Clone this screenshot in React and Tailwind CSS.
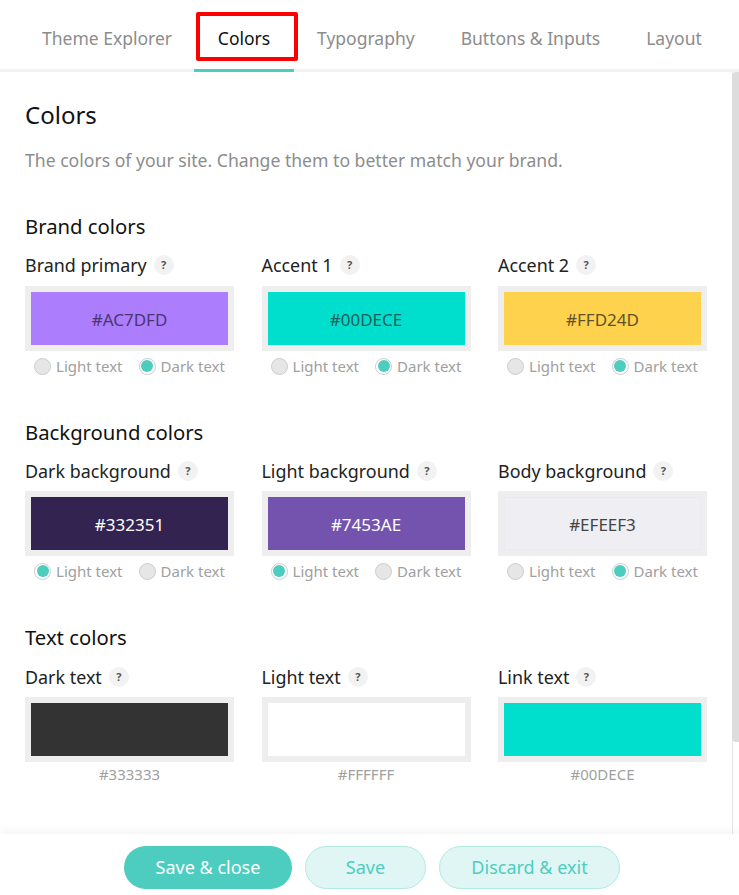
import React from 'react';

const tabs = ['Theme Explorer', 'Colors', 'Typography', 'Buttons & Inputs', 'Layout'];

const sections = [
  {
    title: 'Brand colors',
    top: 'mt-[41px]',
    gridTop: 'mt-[14px]',
    swatchTop: 'mt-[9px]',
    items: [
      { label: 'Brand primary', hex: '#AC7DFD', color: 'bg-[#AC7DFD]', text: 'text-[#4a3570]', mode: 'dark' },
      { label: 'Accent 1', hex: '#00DECE', color: 'bg-[#00DECE]', text: 'text-[#1d5f5a]', mode: 'dark' },
      { label: 'Accent 2', hex: '#FFD24D', color: 'bg-[#FFD24D]', text: 'text-[#5f5128]', mode: 'dark' },
    ],
  },
  {
    title: 'Background colors',
    top: 'mt-[44px]',
    gridTop: 'mt-[14px]',
    swatchTop: 'mt-[8px]',
    items: [
      { label: 'Dark background', hex: '#332351', color: 'bg-[#332351]', text: 'text-white', mode: 'light' },
      { label: 'Light background', hex: '#7453AE', color: 'bg-[#7453AE]', text: 'text-white', mode: 'light' },
      { label: 'Body background', hex: '#EFEEF3', color: 'bg-[#EFEEF3] border border-[#ebebef]', text: 'text-[#444444]', mode: 'dark' },
    ],
  },
  {
    title: 'Text colors',
    top: 'mt-[44px]',
    gridTop: 'mt-[15px]',
    swatchTop: 'mt-[8px]',
    items: [
      { label: 'Dark text', hex: '#333333', color: 'bg-[#333333]' },
      { label: 'Light text', hex: '#FFFFFF', color: 'bg-white' },
      { label: 'Link text', hex: '#00DECE', color: 'bg-[#00DECE]' },
    ],
  },
];

function Radio({ label, checked }) {
  return (
    <div className="flex items-center gap-[5px]">
      <span className={`w-[17px] h-[17px] rounded-full border border-[#cccccc] ${checked ? 'bg-white p-[1.5px]' : 'bg-[#e6e6e6]'}`}>
        {checked && <span className="block w-full h-full rounded-full bg-[#4ccdc0]"></span>}
      </span>
      <span>{label}</span>
    </div>
  );
}

function Swatch({ item, swatchTop }) {
  return (
    <div>
      <div className="flex items-center h-[24px] text-[17.9px] text-[#222222]">
        <span>{item.label}</span>
        <span className="ml-[7px] w-[20px] h-[20px] rounded-full bg-[#f2f2f2] flex items-center justify-center text-[11px] font-bold text-[#555555]">?</span>
      </div>
      <div className={`${swatchTop} bg-[#eeeeee] p-[6px] h-[65px]`}>
        <div className={`h-[53px] pt-[2px] flex items-center justify-center text-[17px] ${item.color} ${item.text || ''}`}>
          {item.mode ? item.hex : ''}
        </div>
      </div>
      {item.mode ? (
        <div className="mt-[6px] flex justify-center gap-[16px] text-[15px] leading-[18px] text-[#a0a0a0]">
          <Radio label="Light text" checked={item.mode === 'light'} />
          <Radio label="Dark text" checked={item.mode === 'dark'} />
        </div>
      ) : (
        <div className="mt-[3px] text-center text-[15px] leading-[18px] text-[#a0a0a0]">{item.hex}</div>
      )}
    </div>
  );
}

export default function App() {
  return (
    <div className="h-[895px] flex flex-col bg-white font-['Noto_Sans','Open_Sans',sans-serif] overflow-hidden">
      <div className="h-[72px] shrink-0 border-b-[3px] border-[#f2f2f2] flex pl-[19px] text-[17.5px] text-[#8c8c8c]">
        {tabs.map((t) => (
          <div
            key={t}
            className={`h-[72px] flex items-center justify-center ${t === 'Colors' ? 'w-[100px] pt-[7px] text-[#111111] border-b-[3px] border-[#4ccdc0] relative' : t === 'Theme Explorer' ? 'pt-[4px] pl-[23px] pr-[22px]' : 'pt-[4px] px-[23px]'}`}
          >
            {t}
            {t === 'Colors' && (
              <span className="absolute left-[2px] top-[12px] w-[102px] h-[49px] border-[4px] border-[#ff0000] rounded-[2px]"></span>
            )}
          </div>
        ))}
      </div>

      <div className="flex-1 relative px-[25px] pt-[27px]">
        <h1 className="text-[24px] leading-[32px] text-[#111111]">Colors</h1>
        <p className="mt-[17px] text-[17.6px] leading-[24px] text-[#8c8c8c]">The colors of your site. Change them to better match your brand.</p>
        {sections.map((s) => (
          <div key={s.title} className={s.top}>
            <h2 className="text-[20.3px] leading-[26px] text-[#111111]">{s.title}</h2>
            <div className={`${s.gridTop} w-[682px] grid grid-cols-3 gap-x-[27.5px]`}>
              {s.items.map((item) => (
                <Swatch key={item.label} item={item} swatchTop={s.swatchTop} />
              ))}
            </div>
          </div>
        ))}
        <div className="absolute right-0 top-0 bottom-0 w-[7px] border-l border-[#e6e6e6]"></div>
        <div className="absolute right-0 top-0 w-[7px] h-[670px] bg-[#dddddd] rounded-tl-[4px] rounded-bl-[4px]"></div>
      </div>

      <div className="h-[61px] shrink-0 bg-white shadow-[0_-4px_8px_rgba(0,0,0,0.04)] relative flex justify-center gap-[13px] pt-[12px] pl-[5px] text-[18px]">
        <button className="w-[168px] h-[43px] rounded-[22px] bg-[#4ccdc0] text-white">Save &amp; close</button>
        <button className="w-[121px] h-[43px] rounded-[22px] bg-[#e0f6f4] border border-[#b2e9e3] text-[#4ccdc0]">Save</button>
        <button className="w-[181px] h-[43px] rounded-[22px] bg-[#e0f6f4] border border-[#b2e9e3] text-[#4ccdc0]">Discard &amp; exit</button>
      </div>
    </div>
  );
}
